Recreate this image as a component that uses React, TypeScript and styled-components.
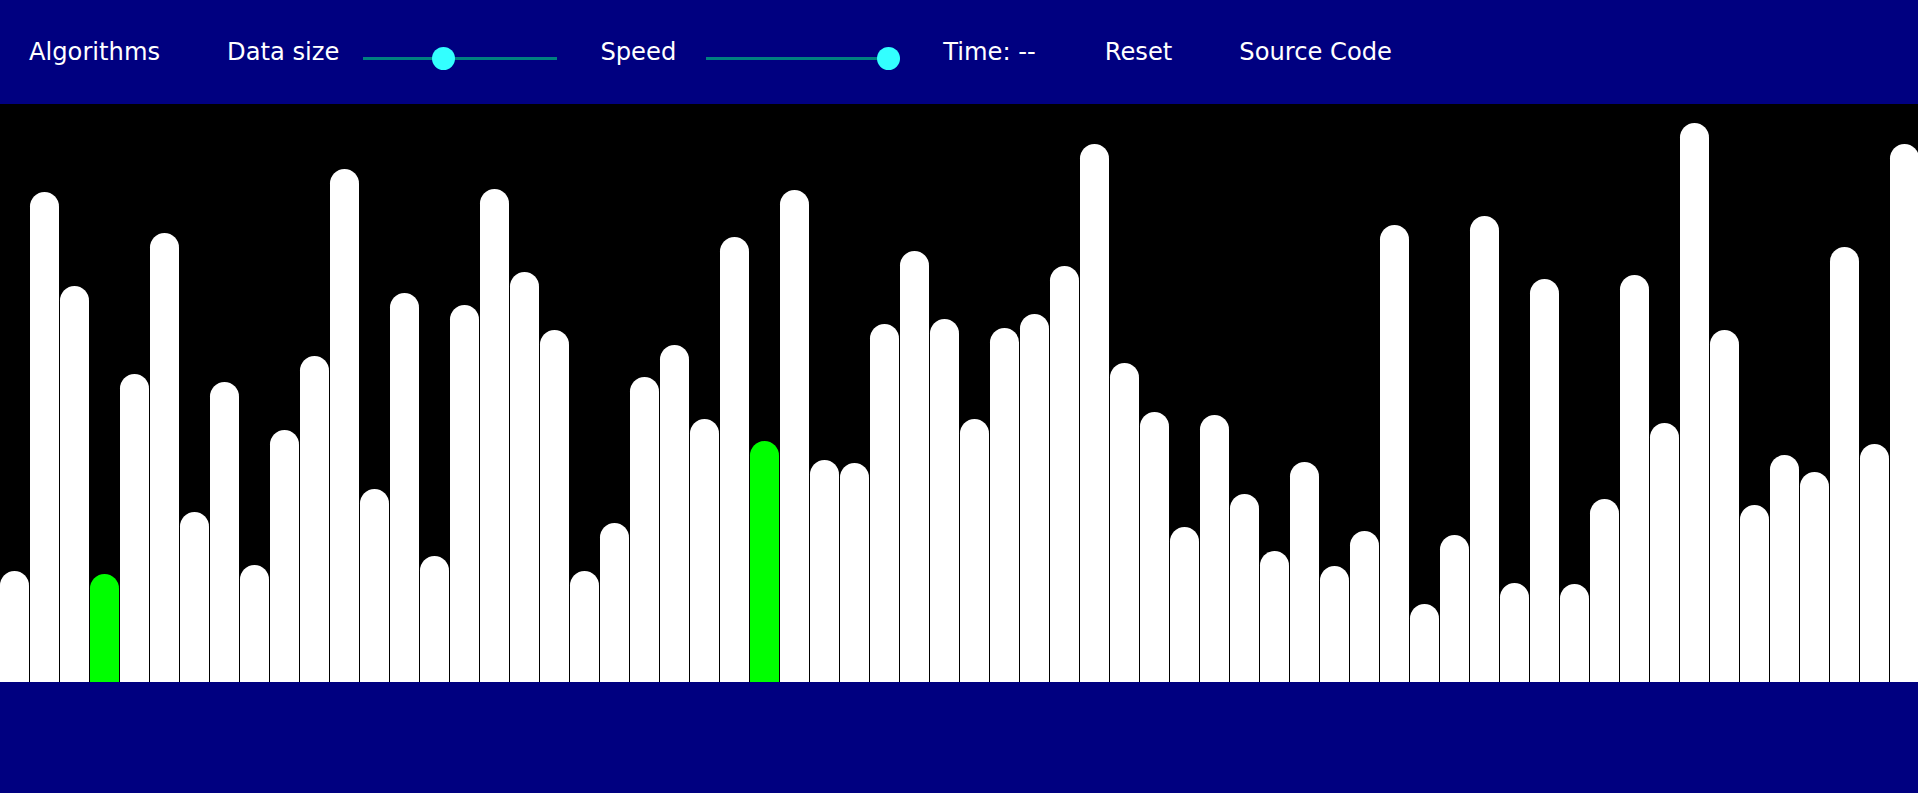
import React from "react";
import styled, { createGlobalStyle } from "styled-components";

const GlobalStyle = createGlobalStyle`
  html, body {
    margin: 0;
    padding: 0;
    background: #000080;
  }
  body {
    font-family: "DejaVu Sans", "Liberation Sans", sans-serif;
    overflow: hidden;
  }
`;

const Page = styled.div`
  width: 100%;
  min-height: 793px;
  background: #000080;
  display: flex;
  flex-direction: column;
`;

const Toolbar = styled.nav`
  height: 104px;
  flex: 0 0 104px;
  display: flex;
  align-items: center;
  padding-left: 29px;
  background: #000080;
  color: #ffffff;
  font-size: 24.2px;
  font-weight: 400;
`;

const NavLink = styled.a<{ $gap?: number }>`
  color: #ffffff;
  text-decoration: none;
  white-space: nowrap;
  cursor: pointer;
  margin-right: ${(p) => p.$gap ?? 0}px;
`;

const Label = styled.span`
  color: #ffffff;
  white-space: nowrap;
`;

const Range = styled.input.attrs({ type: "range" })<{ $left: number; $right: number }>`
  -webkit-appearance: none;
  appearance: none;
  width: 194px;
  height: 23px;
  margin: 12px ${(p) => p.$right}px 0 ${(p) => p.$left}px;
  padding: 0;
  background: transparent;
  outline: none;

  &::-webkit-slider-runnable-track {
    height: 3px;
    background: #008080;
    border: none;
  }
  &::-webkit-slider-thumb {
    -webkit-appearance: none;
    appearance: none;
    width: 23px;
    height: 23px;
    margin-top: -10px;
    border-radius: 50%;
    background: #33ffff;
    border: none;
    cursor: pointer;
  }
  &::-moz-range-track {
    height: 3px;
    background: #008080;
  }
  &::-moz-range-thumb {
    width: 23px;
    height: 23px;
    border-radius: 50%;
    background: #33ffff;
    border: none;
  }
`;

const Canvas = styled.div`
  height: 578px;
  flex: 0 0 578px;
  background: #000000;
  display: flex;
  align-items: flex-end;
  overflow: hidden;
`;

const Bar = styled.div<{ $active?: boolean }>`
  flex: 0 0 29px;
  margin-right: 1px;
  background: ${(p) => (p.$active ? "#00ff00" : "#ffffff")};
  border-radius: 14.5px 14.5px 0 0;
`;

const Footer = styled.div`
  flex: 1;
  background: #000080;
`;

// measured bar tops (in zoom units); converted to heights below
const TOPS = [
  1263, 237, 490, 1271, 729, 349, 1103, 752, 1246, 881, 680, 174, 1041, 509, 1222, 542,
  229, 454, 611, 1261, 1133, 738, 651, 852, 360, 910, 232, 963, 971, 593, 396, 581,
  852, 604, 568, 438, 108, 700, 833, 1142, 841, 1053, 1208, 968, 1247, 1154, 326, 1350,
  1165, 303, 1293, 473, 1297, 1066, 461, 861, 51, 610, 1083, 949, 995, 387, 918, 108,
];

const ACTIVE = new Set([3, 25]);

export default function App() {
  const heights = TOPS.map((z) => (1562 - z) / 2.704);
  return (
    <>
      <GlobalStyle />
      <Page>
        <Toolbar>
          <NavLink $gap={67}>Algorithms</NavLink>
          <Label>Data size</Label>
          <Range $left={24} $right={43} min={0} max={100} defaultValue={40} />
          <Label>Speed</Label>
          <Range $left={30} $right={43} min={0} max={100} defaultValue={100} />
          <NavLink $gap={69}>Time: --</NavLink>
          <NavLink $gap={67}>Reset</NavLink>
          <NavLink>Source Code</NavLink>
        </Toolbar>
        <Canvas>
          {heights.map((h, i) => (
            <Bar key={i} $active={ACTIVE.has(i)} style={{ height: `${h}px` }} />
          ))}
        </Canvas>
        <Footer />
      </Page>
    </>
  );
}
